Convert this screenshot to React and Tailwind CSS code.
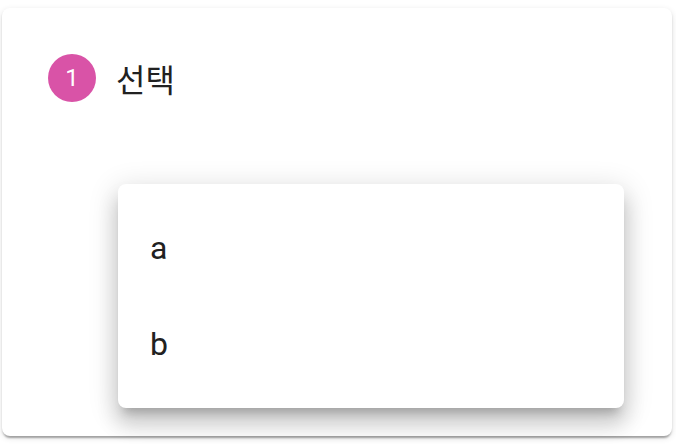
export default function App() {
  const items = ['a', 'b'];
  return (
    <div className="relative w-[676px] h-[448px] pt-[8px] bg-white font-['Roboto','Noto_Sans_CJK_KR',sans-serif]">
      <div className="ml-[2px] w-[670px] h-[428px] rounded-[8px] bg-white shadow-[0_4px_2px_-2px_rgba(0,0,0,0.2),0_2px_2px_0_rgba(0,0,0,0.14),0_2px_6px_0_rgba(0,0,0,0.12)]">
        <div className="flex items-center gap-[20px] pl-[46px] pt-[46px]">
          <div className="flex items-center justify-center w-12 h-12 rounded-full bg-[#d953a7] text-white text-[24px] leading-none">
            1
          </div>
          <span className="text-[32px] leading-none text-[#212121] font-['Noto_Sans_CJK_KR',sans-serif]">선택</span>
        </div>
      </div>

      {/* popover menu */}
      <div className="absolute left-[118px] top-[184px] w-[506px] py-4 rounded-[8px] bg-white shadow-[0_10px_10px_-6px_rgba(0,0,0,0.2),0_16px_20px_2px_rgba(0,0,0,0.14),0_6px_28px_4px_rgba(0,0,0,0.12)]">
        {items.map((it) => (
          <div key={it} className="flex items-center h-24 px-8 text-[32px] text-[#212121]">
            {it}
          </div>
        ))}
      </div>
    </div>
  );
}
